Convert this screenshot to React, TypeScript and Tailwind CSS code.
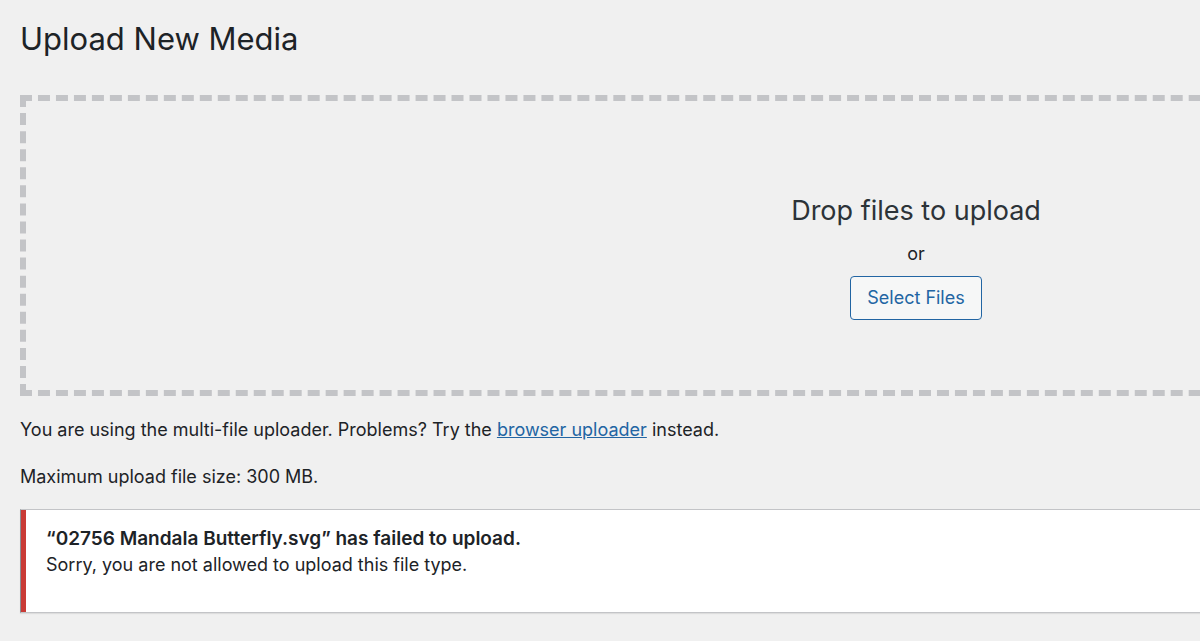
export default function App() {
  return (
    <main className="min-h-screen overflow-x-hidden bg-[#f0f0f0] pt-5 pl-5 font-[Inter,sans-serif] text-[18px] leading-[26px] text-[#1d2327]">
      <h1 className="text-[31px] leading-[38px]">Upload New Media</h1>
      <section className="mt-[37px] -mr-[612px] flex h-[301px] flex-col items-center border-[6px] border-dashed border-[#c3c4c7] pt-[92px]">
        <h2 className="text-[27px] leading-[36px] text-[#2c3338]">Drop files to upload</h2>
        <p className="mt-3">or</p>
        <button type="button" className="mt-[9px] h-11 rounded border border-[#2265a3] bg-[#f6f7f7] px-4 text-[#2265a3]">Select Files</button>
      </section>
      <p className="mt-[21px]">You are using the multi-file uploader. Problems? Try the <a href="#" className="text-[#2265a3] underline">browser uploader</a> instead.</p>
      <p className="mt-[21px]">Maximum upload file size: 300 MB.</p>
      <div role="alert" className="mt-[19px] border border-r-0 border-[#c3c4c7] border-l-[#8c8f94] bg-white shadow-[0_1px_1px_rgba(0,0,0,0.08)]">
        <div className="border-l-[5px] border-[#c93b36] pt-4 pb-[34px] pl-5">
          <strong className="block text-[19px] font-semibold">“02756 Mandala Butterfly.svg” has failed to upload.</strong>
          <p>Sorry, you are not allowed to upload this file type.</p>
        </div>
      </div>
    </main>
  );
}
